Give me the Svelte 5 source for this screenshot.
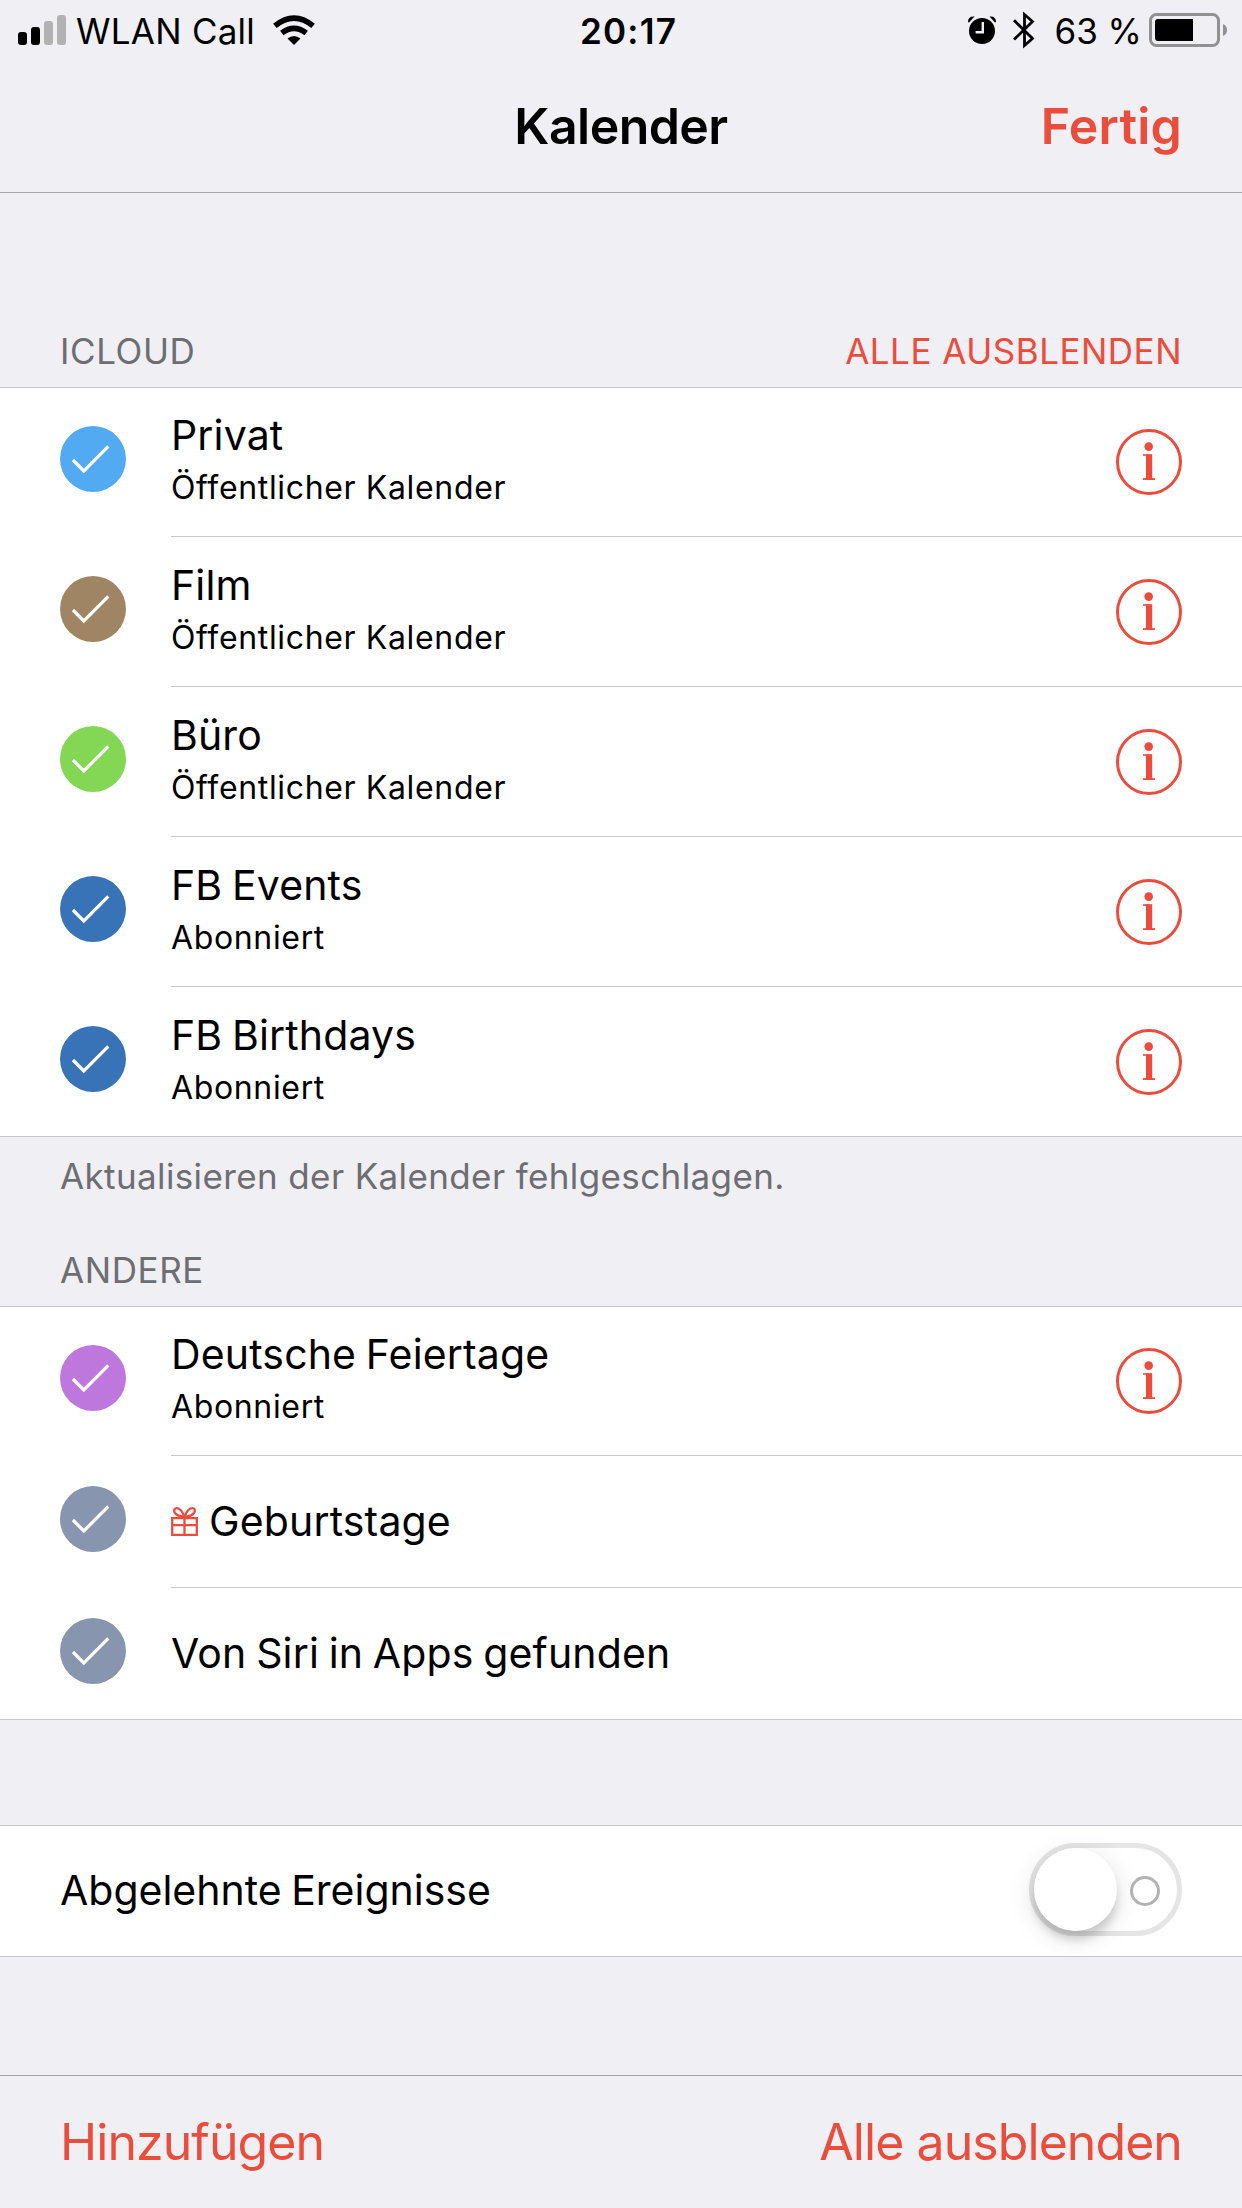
<script>
  const icloud = [
    { name: 'Privat', detail: 'Öffentlicher Kalender', color: '#52aaf2' },
    { name: 'Film', detail: 'Öffentlicher Kalender', color: '#9f8563' },
    { name: 'Büro', detail: 'Öffentlicher Kalender', color: '#83d754' },
    { name: 'FB Events', detail: 'Abonniert', color: '#3873b8' },
    { name: 'FB Birthdays', detail: 'Abonniert', color: '#3873b8' },
  ];

  const others = [
    { name: 'Deutsche Feiertage', detail: 'Abonniert', color: '#be77dc' },
    { name: 'Geburtstage', gift: true, color: '#8795af' },
    { name: 'Von Siri in Apps gefunden', color: '#8795af' },
  ];

  let hidden = $state([]);
  let showDeclined = $state(false);

  function toggle(name) {
    hidden = hidden.includes(name) ? hidden.filter((n) => n !== name) : [...hidden, name];
  }

  function hideAll(list) {
    hidden = [...new Set([...hidden, ...list.map((c) => c.name)])];
  }
</script>

{#snippet calendarRow(cal)}
  <div class="row" class:tall={cal.detail}>
    <button class="check" aria-label={cal.name} onclick={() => toggle(cal.name)}>
      <svg width="66" height="66" viewBox="0 0 66 66">
        {#if hidden.includes(cal.name)}
          <circle cx="33" cy="33" r="31.5" fill="none" stroke={cal.color} stroke-width="3" />
        {:else}
          <circle cx="33" cy="33" r="33" fill={cal.color} />
          <path d="M12.9 34 L23.8 45 L48.3 20.3" fill="none" stroke="#fff" stroke-width="3.2" />
        {/if}
      </svg>
    </button>
    <div class="body">
      <div class="text">
        <div class="name">
          {#if cal.gift}
            <svg class="gift" width="27" height="29" viewBox="0 0 27 29" fill="none" stroke="#eb4d3d" stroke-width="2.3">
              <path d="M1.2 11.2 H25.8 V27.8 H1.2 Z M1 18.2 H26 M13.5 10 V28" />
              <path d="M13.5 10 C11 3 8 1.2 5.5 1.2 C3 1.2 2.6 4 4 6 C5.5 8 9 9.5 13.5 10 C18 9.5 21.5 8 23 6 C24.4 4 24 1.2 21.5 1.2 C19 1.2 16 3 13.5 10" />
            </svg>
          {/if}
          <span>{cal.name}</span>
        </div>
        {#if cal.detail}
          <div class="detail">{cal.detail}</div>
        {/if}
      </div>
      {#if cal.detail}
        <button class="info" aria-label="Info">
          <svg width="66" height="66" viewBox="0 0 66 66">
            <circle cx="33" cy="33" r="31.5" fill="none" stroke="#eb4d3d" stroke-width="3" />
            <g fill="#eb4d3d">
              <circle cx="32.7" cy="17.6" r="4.3" />
              <rect x="27" y="25.2" width="6" height="1.6" />
              <rect x="30" y="25.2" width="6.2" height="25" />
              <rect x="27" y="49.2" width="12" height="1.8" />
            </g>
          </svg>
        </button>
      {/if}
    </div>
  </div>
{/snippet}

<div class="screen">
  <header>
    <div class="status">
      <div class="left">
        <svg width="48" height="30" viewBox="0 0 48 30">
          <rect x="0" y="17" width="9" height="13" rx="3" />
          <rect x="13" y="12" width="9" height="18" rx="3" />
          <rect x="26" y="6" width="9" height="24" rx="3" fill="#b2b2b4" />
          <rect x="39" y="0" width="9" height="30" rx="3" fill="#b2b2b4" />
        </svg>
        <span class="carrier">WLAN Call</span>
        <svg width="42" height="30" viewBox="0 0 42 30">
          <path d="M14.5 23.5 Q21 18.5 27.5 23.5 L21 30 Z" />
          <path d="M8.8 18 Q21 8.6 33.2 18" fill="none" stroke="#000" stroke-width="5.6" />
          <path d="M1.9 10.8 Q21 -4.7 40.1 10.8" fill="none" stroke="#000" stroke-width="5.6" />
        </svg>
      </div>
      <div class="time">20:17</div>
      <div class="right">
        <svg class="alarm" width="28" height="28" viewBox="0 0 28 28">
          <circle cx="14" cy="15" r="13" />
          <path d="M0 6 Q0 0 6.5 .5 L1 6.5 Z M28 6 Q28 0 21.5 .5 L27 6.5 Z" />
          <path d="M14.8 6 V16.2 H7.6" fill="none" stroke="#efeff4" stroke-width="2.4" />
        </svg>
        <svg class="bluetooth" width="22" height="38" viewBox="0 0 22 38" fill="none" stroke="#000" stroke-width="2.8">
          <path d="M1 9.3 L19.5 27.5 L11.5 34.5 V3.5 L19.5 10.5 L1 28.6" />
        </svg>
        <span class="percent">63 %</span>
        <svg width="78" height="34" viewBox="0 0 78 34">
          <rect x="1.5" y="1.5" width="68" height="31" rx="6" fill="none" stroke="#919193" stroke-width="3" />
          <path d="M9 6 H44 V28 H9 Q6 28 6 25 V9 Q6 6 9 6 Z" />
          <path d="M74 11 Q78 12.5 78 17 Q78 21.5 74 23 Z" fill="#919193" />
        </svg>
      </div>
    </div>
    <nav>
      <h1>Kalender</h1>
      <button class="done">Fertig</button>
    </nav>
  </header>

  <main>
    <div class="section-head first">
      <span>ICLOUD</span>
      <button class="hide" onclick={() => hideAll(icloud)}>ALLE AUSBLENDEN</button>
    </div>
    <div class="group">
      {#each icloud as cal (cal.name)}
        {@render calendarRow(cal)}
      {/each}
    </div>
    <p class="note">Aktualisieren der Kalender fehlgeschlagen.</p>

    <div class="section-head">
      <span>ANDERE</span>
    </div>
    <div class="group">
      {#each others as cal (cal.name)}
        {@render calendarRow(cal)}
      {/each}
    </div>

    <div class="group declined">
      <span class="name label">Abgelehnte Ereignisse</span>
      <button
        class="switch"
        class:on={showDeclined}
        aria-label="Abgelehnte Ereignisse"
        onclick={() => (showDeclined = !showDeclined)}
      >
        <span class="knob"></span>
        <span class="off-mark"></span>
      </button>
    </div>
  </main>

  <footer>
    <button>Hinzufügen</button>
    <button onclick={() => hideAll([...icloud, ...others])}>Alle ausblenden</button>
  </footer>
</div>

<style>
  :global(body) {
    margin: 0;
    background: #efeff4;
  }

  .screen {
    display: flex;
    flex-direction: column;
    width: 1242px;
    height: 2208px;
    overflow: hidden;
    background: #efeff4;
    color: #000;
    font-family: Inter, 'Liberation Sans', sans-serif;
    font-size: 35px;
    line-height: 42px;
    white-space: nowrap;
  }

  svg {
    display: block;
    flex: none;
  }

  button {
    padding: 0;
    border: 0;
    background: none;
    color: #eb4d3d;
    font: inherit;
    letter-spacing: inherit;
    cursor: pointer;
  }

  header {
    height: 193px;
    box-sizing: border-box;
    border-bottom: 1px solid #a7a7aa;
  }

  .status {
    display: grid;
    grid-template-columns: 1fr auto 1fr;
    height: 60px;
    padding: 0 15px 0 18px;
  }

  .left,
  .right {
    display: flex;
    align-items: center;
  }

  .right {
    justify-content: flex-end;
  }

  .carrier {
    margin: 2px 18px 0 10px;
    letter-spacing: 0.25px;
  }

  .time {
    padding: 10px 0 0 12px;
    font-weight: 600;
    letter-spacing: 1.2px;
  }

  .bluetooth {
    margin: 0 19px 0 17px;
  }

  .percent {
    margin: 2px 7px 0 0;
  }

  nav {
    display: grid;
    grid-template-columns: 1fr auto 1fr;
    align-items: start;
    padding: 36px 60px 0;
    font-size: 50px;
    line-height: 60px;
  }

  h1 {
    grid-column: 2;
    margin: 0;
    font-size: inherit;
    font-weight: 600;
    letter-spacing: -0.55px;
  }

  .done {
    justify-self: end;
    font-weight: 600;
    letter-spacing: 0.2px;
  }

  .section-head {
    display: flex;
    justify-content: space-between;
    align-items: flex-end;
    box-sizing: border-box;
    height: 109px;
    padding: 0 60px 15px;
    color: #6d6d72;
    letter-spacing: 0.6px;
  }

  .section-head.first {
    height: 194px;
  }

  .hide {
    letter-spacing: 0.5px;
  }

  .note {
    height: 42px;
    margin: 0;
    padding: 18px 60px 0;
    color: #6d6d72;
    letter-spacing: 0.38px;
  }

  .group {
    background: #fff;
    box-shadow: inset 0 1px 0 #c8c7cc, inset 0 -1px 0 #c8c7cc;
  }

  .row {
    display: flex;
    height: 132px;
    padding-left: 60px;
  }

  .row.tall {
    height: 150px;
  }

  .check {
    height: 66px;
    margin: 30px 45px 0 0;
  }

  .tall .check {
    margin-top: 39px;
  }

  .body {
    display: flex;
    flex: 1;
    justify-content: space-between;
    align-items: center;
    box-sizing: border-box;
    padding-right: 60px;
    border-bottom: 1px solid #c8c7cc;
  }

  .row:last-child .body {
    border-bottom-color: transparent;
  }

  .text {
    align-self: flex-start;
    padding-top: 40px;
  }

  .tall .text {
    padding-top: 23px;
  }

  .name {
    display: flex;
    align-items: center;
    font-size: 41px;
    line-height: 50px;
    letter-spacing: 0.15px;
    word-spacing: -2px;
  }

  .gift {
    margin-right: 11px;
  }

  .detail {
    margin-top: 8px;
    font-size: 32px;
    line-height: 40px;
    letter-spacing: 0.65px;
  }

  .declined {
    display: flex;
    justify-content: space-between;
    align-items: flex-start;
    box-sizing: border-box;
    height: 132px;
    margin-top: 105px;
    padding: 18px 60px 0;
  }

  .label {
    padding-top: 22px;
    letter-spacing: 0;
  }

  .switch {
    display: flex;
    justify-content: space-between;
    align-items: center;
    box-sizing: border-box;
    width: 153px;
    height: 93px;
    padding-right: 17px;
    border: 5px solid #e5e5e5;
    border-radius: 47px;
  }

  .switch.on {
    flex-direction: row-reverse;
    padding: 0 0 0 17px;
    border-color: #4cd964;
    background: #4cd964;
  }

  .knob {
    width: 83px;
    height: 83px;
    border-radius: 50%;
    background: #fff;
    box-shadow: 0 9px 9px rgba(0, 0, 0, 0.14), 0 6px 27px rgba(0, 0, 0, 0.13);
  }

  .off-mark {
    box-sizing: border-box;
    width: 30px;
    height: 30px;
    margin-top: 3px;
    border: 3px solid #b2b2b2;
    border-radius: 50%;
  }

  footer {
    display: flex;
    justify-content: space-between;
    align-items: flex-start;
    box-sizing: border-box;
    height: 133px;
    margin-top: auto;
    padding: 36px 60px 0;
    border-top: 1px solid #a7a7aa;
    font-size: 50px;
    line-height: 60px;
    letter-spacing: -0.93px;
  }
</style>
